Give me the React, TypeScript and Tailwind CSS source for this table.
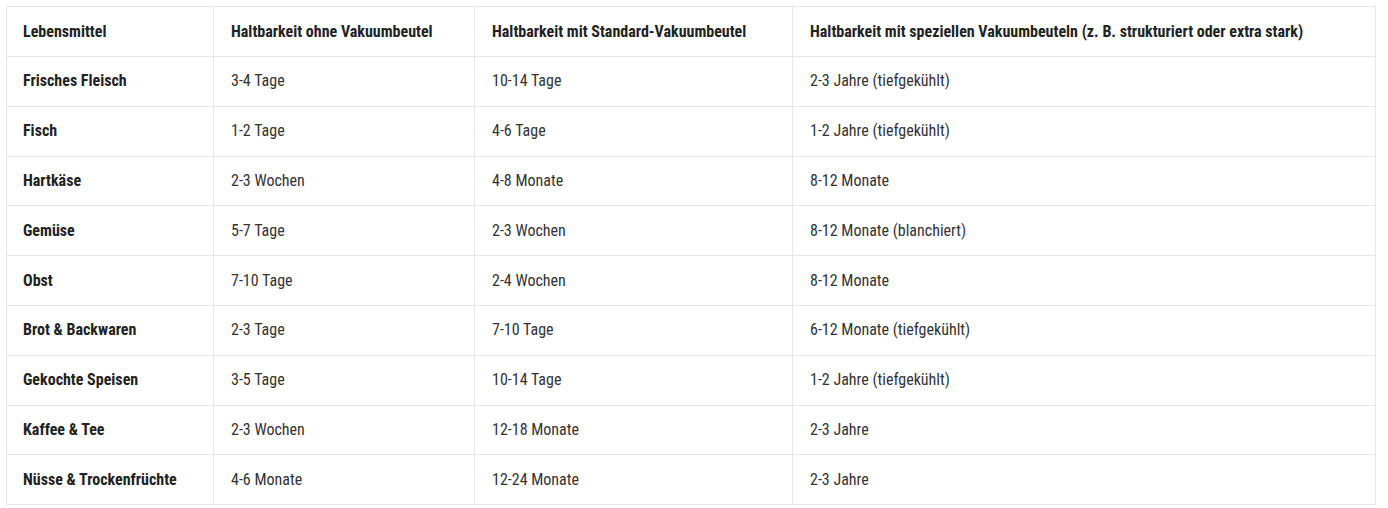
const headers = [
  "Lebensmittel",
  "Haltbarkeit ohne Vakuumbeutel",
  "Haltbarkeit mit Standard-Vakuumbeutel",
  "Haltbarkeit mit speziellen Vakuumbeuteln (z. B. strukturiert oder extra stark)",
];

const rows: string[][] = [
  ["Frisches Fleisch", "3-4 Tage", "10-14 Tage", "2-3 Jahre (tiefgekühlt)"],
  ["Fisch", "1-2 Tage", "4-6 Tage", "1-2 Jahre (tiefgekühlt)"],
  ["Hartkäse", "2-3 Wochen", "4-8 Monate", "8-12 Monate"],
  ["Gemüse", "5-7 Tage", "2-3 Wochen", "8-12 Monate (blanchiert)"],
  ["Obst", "7-10 Tage", "2-4 Wochen", "8-12 Monate"],
  ["Brot & Backwaren", "2-3 Tage", "7-10 Tage", "6-12 Monate (tiefgekühlt)"],
  ["Gekochte Speisen", "3-5 Tage", "10-14 Tage", "1-2 Jahre (tiefgekühlt)"],
  ["Kaffee & Tee", "2-3 Wochen", "12-18 Monate", "2-3 Jahre"],
  ["Nüsse & Trockenfrüchte", "4-6 Monate", "12-24 Monate", "2-3 Jahre"],
];

const cols = "grid grid-cols-[206px_261px_318px_1fr]";

export default function App() {
  return (
    <div className="bg-white p-[6px] pr-[12px] font-['Roboto_Condensed','Roboto',sans-serif] [font-stretch:condensed] text-[16px]">
      <div className="border border-[#e6e8ea]">
        <div className={`${cols} h-[49px] font-bold text-[#222]`}>
          {headers.map((h, i) => (
            <div
              key={h}
              className={`flex items-center pl-[16px] ${i > 0 ? "border-l border-[#e6e8ea] pl-[17px]" : ""}`}
            >
              {h}
            </div>
          ))}
        </div>
        {rows.map((r) => (
          <div key={r[0]} className={`${cols} h-[49.8px] border-t border-[#e6e8ea] text-[#333]`}>
            {r.map((c, i) => (
              <div
                key={i}
                className={`flex items-center pl-[16px] ${
                  i === 0 ? "font-bold text-[#222]" : "border-l border-[#e6e8ea] pl-[17px]"
                }`}
              >
                {c}
              </div>
            ))}
          </div>
        ))}
      </div>
    </div>
  );
}
